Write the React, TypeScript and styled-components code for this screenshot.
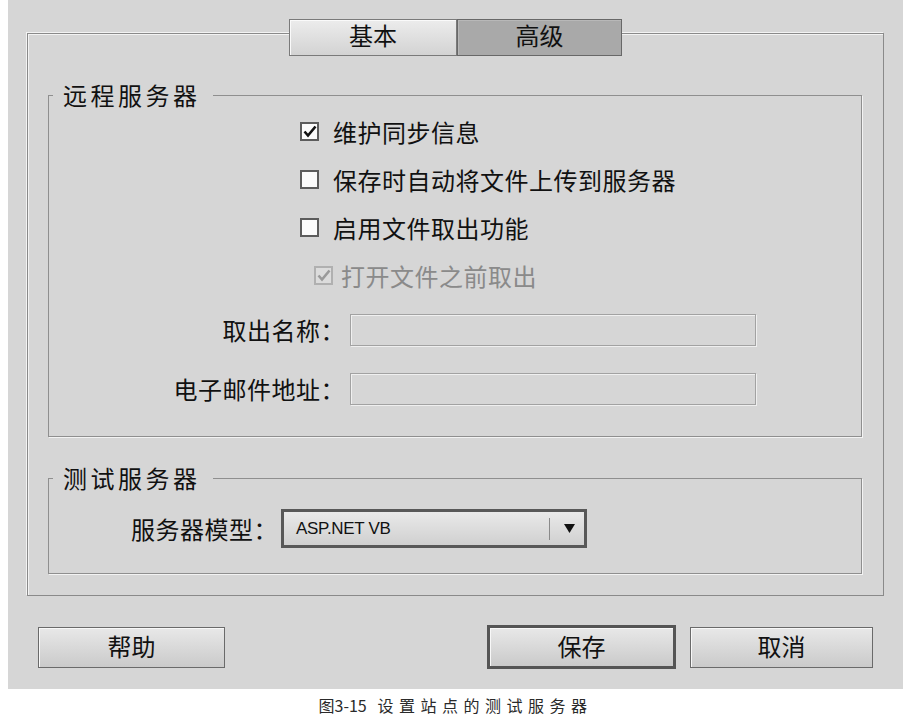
import styled, { createGlobalStyle } from "styled-components";

const GlobalStyle = createGlobalStyle`
  body {
    margin: 0;
    background: #ffffff;
    font-family: "Noto Sans CJK SC", "Liberation Sans", sans-serif;
    color: #111;
  }
`;

const Dialog = styled.div`
  margin-left: 8px;
  width: 895px;
  height: 689px;
  box-sizing: border-box;
  background: #d6d6d6;
  padding: 0 19px;
  display: flex;
  flex-direction: column;
`;

const Panel = styled.div`
  margin-top: 33px;
  border: 1px solid #8a8a8a;
  box-shadow: -1px -1px 0 #f3f3f3, inset 1px 1px 0 #f3f3f3;
  padding: 0 21px 21px 20px;
  display: flex;
  flex-direction: column;
`;

const TabRow = styled.div`
  display: flex;
  justify-content: center;
  margin-top: -15px;
  padding-left: 1px;
`;

const Tab = styled.div<{ $active?: boolean }>`
  width: ${(p) => (p.$active ? "165px" : "168px")};
  height: 37px;
  box-sizing: border-box;
  border: 1px solid ${(p) => (p.$active ? "#686868" : "#7a7a7a")};
  background: ${(p) =>
    p.$active ? "#a9a9a9" : "linear-gradient(#ececec, #d3d3d3)"};
  box-shadow: inset 1px 1px 0 ${(p) => (p.$active ? "#b8b8b8" : "#fafafa")};
  display: flex;
  align-items: center;
  justify-content: center;
  font-size: 24px;
  line-height: 1;
  padding-bottom: 6px;
`;

const Group = styled.fieldset<{ $top: number }>`
  margin: ${(p) => p.$top}px 0 0 0;
  padding: 0;
  border: 1px solid #8f8f8f;
  box-shadow: 1px 1px 0 #f3f3f3;
  min-width: 0;
`;

const Legend = styled.legend`
  margin-left: 4px;
  padding: 0 12px 0 10px;
  font-size: 24px;
  line-height: 24px;
  letter-spacing: 3.5px;
`;

const Checks = styled.div`
  display: flex;
  flex-direction: column;
  padding-left: 251px;
`;

const CheckRow = styled.label<{ $indent?: boolean; $disabled?: boolean }>`
  height: 48px;
  display: flex;
  align-items: center;
  gap: ${(p) => (p.$indent ? "8px" : "14px")};
  padding-left: ${(p) => (p.$indent ? "14px" : "0")};
  font-size: 24px;
  letter-spacing: 0.5px;
  color: ${(p) => (p.$disabled ? "#8a8a8a" : "#111")};
`;

const Box = styled.span<{ $disabled?: boolean }>`
  width: 19px;
  height: 19px;
  box-sizing: border-box;
  border: 2px solid ${(p) => (p.$disabled ? "#b0b0b0" : "#5c5c5c")};
  background: ${(p) => (p.$disabled ? "#dcdcdc" : "#fbfbfb")};
  display: flex;
  align-items: center;
  justify-content: center;
  flex-shrink: 0;
`;

const Form = styled.div<{ $label: number; $field: number }>`
  display: grid;
  grid-template-columns: ${(p) => p.$label}px ${(p) => p.$field}px;
  column-gap: 5px;
  align-items: center;
`;

const FieldLabel = styled.span`
  text-align: right;
  font-size: 24px;
  line-height: 30px;
  letter-spacing: 0.5px;
  white-space: nowrap;
`;

const TextInput = styled.div`
  height: 32px;
  box-sizing: border-box;
  border: 1px solid #a2a2a2;
  box-shadow: inset 1px 1px 0 #f0f0f0, 1px 1px 0 #efefef;
  background: #d6d6d6;
`;

const RemoteForm = styled(Form)`
  margin-top: 15px;
  row-gap: 27px;
  padding-bottom: 31px;
`;

const TestForm = styled(Form)`
  padding: 19px 0 25px;
  column-gap: 3px;
`;

const Select = styled.div`
  height: 39px;
  box-sizing: border-box;
  border: 3px solid #585858;
  background: linear-gradient(#e9e9e9, #d0d0d0);
  display: flex;
  align-items: center;
  padding-left: 12px;
  font-family: "Liberation Sans", sans-serif;
  font-size: 17px;
  letter-spacing: -0.3px;
`;

const SelectText = styled.span`
  flex: 1;
`;

const SelectDivider = styled.span`
  width: 1px;
  height: 22px;
  background: #8a8a8a;
  margin-right: 14px;
`;

const SelectArrow = styled.span`
  width: 20px;
  display: flex;
  align-items: center;
`;

const Footer = styled.div`
  margin-top: 29px;
  padding: 0 11px;
  display: flex;
  align-items: center;
`;

const Button = styled.div<{ $width: number; $primary?: boolean }>`
  width: ${(p) => p.$width}px;
  height: ${(p) => (p.$primary ? "44px" : "41px")};
  box-sizing: border-box;
  border: ${(p) => (p.$primary ? "3px solid #555" : "1px solid #6a6a6a")};
  background: linear-gradient(#e8e8e8, #cacaca);
  box-shadow: inset 1px 1px 0 #f8f8f8;
  display: flex;
  align-items: center;
  justify-content: center;
  font-size: 24px;
  line-height: 1;
  padding-bottom: 2px;
`;

const Spacer = styled.div`
  flex: 1;
`;

const Caption = styled.div`
  width: 911px;
  text-align: center;
  padding-top: 4px;
  font-size: 16px;
  line-height: 24px;
  color: #2a2a2a;
  white-space: pre;
`;

const CaptionText = styled.span`
  letter-spacing: 5.5px;
`;

const Check = ({ disabled }: { disabled?: boolean }) => (
  <Box $disabled={disabled}>
    <svg width="14" height="13" viewBox="0 0 14 13">
      <path
        d="M1.5 6.5 L5 10.5 L12.5 1.5"
        fill="none"
        stroke={disabled ? "#9a9a9a" : "#111"}
        strokeWidth="2.6"
      />
    </svg>
  </Box>
);

const Empty = () => <Box />;

const App = () => (
  <>
    <GlobalStyle />
    <Dialog>
      <Panel>
        <TabRow>
          <Tab>基本</Tab>
          <Tab $active>高级</Tab>
        </TabRow>
        <Group $top={27}>
          <Legend>远程服务器</Legend>
          <Checks>
            <CheckRow>
              <Check />
              维护同步信息
            </CheckRow>
            <CheckRow>
              <Empty />
              保存时自动将文件上传到服务器
            </CheckRow>
            <CheckRow>
              <Empty />
              启用文件取出功能
            </CheckRow>
            <CheckRow $indent $disabled>
              <Check disabled />
              打开文件之前取出
            </CheckRow>
          </Checks>
          <RemoteForm $label={296} $field={406}>
            <FieldLabel>取出名称：</FieldLabel>
            <TextInput />
            <FieldLabel>电子邮件地址：</FieldLabel>
            <TextInput />
          </RemoteForm>
        </Group>
        <Group $top={29}>
          <Legend>测试服务器</Legend>
          <TestForm $label={229} $field={306}>
            <FieldLabel>服务器模型：</FieldLabel>
            <Select>
              <SelectText>ASP.NET VB</SelectText>
              <SelectDivider />
              <SelectArrow>
                <svg width="11" height="9" viewBox="0 0 11 9">
                  <path d="M0 0 H11 L5.5 9 Z" fill="#111" />
                </svg>
              </SelectArrow>
            </Select>
          </TestForm>
        </Group>
      </Panel>
      <Footer>
        <Button $width={187}>帮助</Button>
        <Spacer />
        <Button $width={189} $primary>
          保存
        </Button>
        <Button $width={183} style={{ marginLeft: 14 }}>
          取消
        </Button>
      </Footer>
    </Dialog>
    <Caption>
      图3-15{"   "}
      <CaptionText>设置站点的测试服务器</CaptionText>
    </Caption>
  </>
);

export default App;
